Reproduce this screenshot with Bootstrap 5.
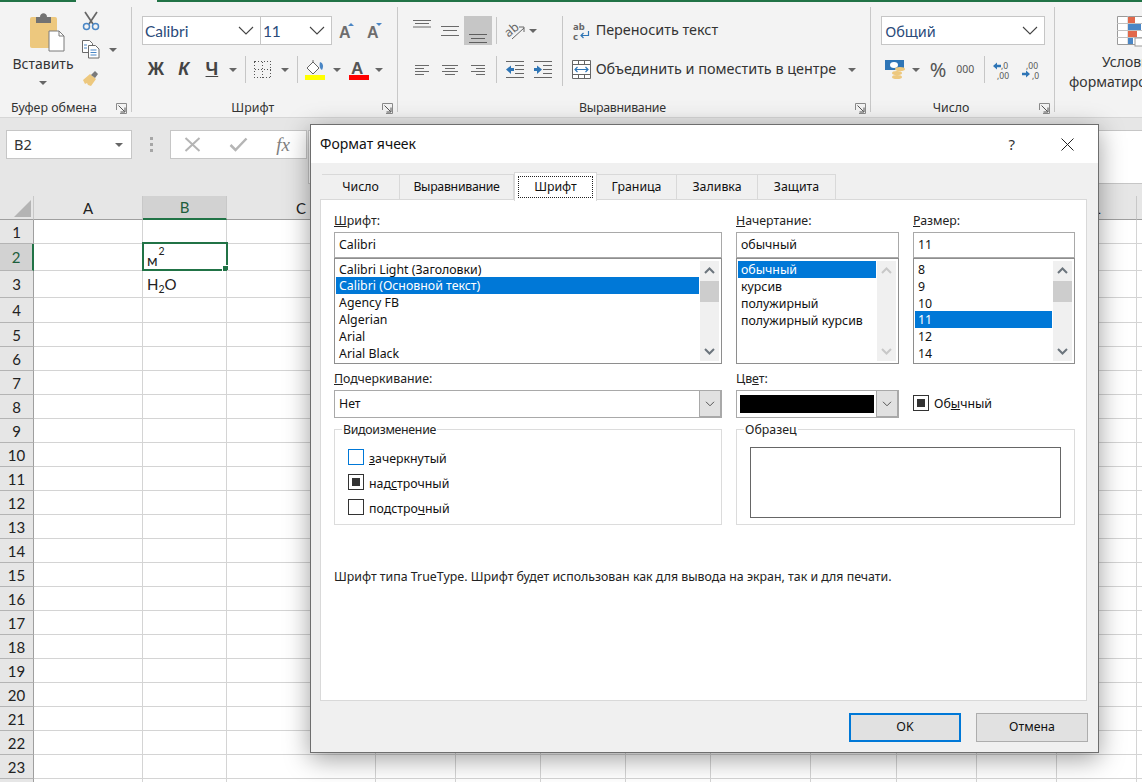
<!DOCTYPE html>
<html lang="ru">
<head>
<meta charset="utf-8">
<title>Формат ячеек</title>
<link href="https://cdn.jsdelivr.net/npm/bootstrap@5.3.0/dist/css/bootstrap.min.css" rel="stylesheet">
<style>
html,body{margin:0;height:782px;overflow:hidden;background:#fff}
body{width:1142px;font-family:"Noto Sans","Open Sans",sans-serif;font-size:13px;color:#222;line-height:1.2;position:relative}
.stripe{height:2px}
.stripe i{display:block;background:#217346}
.stripe .lft{width:76px}
.stripe .gap{width:81px;background:#f3f3f3}
.rib{height:116px;background:#f3f3f3;border-bottom:1px solid #d6d6d6}
.rib svg{overflow:visible}
.grp{height:105px;margin-top:5px;border-right:1px solid #c8c8c8;padding:9px 0 0 10px;position:relative}
.g1{width:132px;padding-left:7px}.g2{width:266px}.g3{width:474px}.g4{width:184px}.g5{width:87px;border:0;padding:0}
.grp-body{height:80px}
.rr{height:29px}
.rr+.rr{margin-top:10px}
.cl{width:28px;height:29px;flex:none}
.cr{width:14px;height:29px;flex:none}
.car{display:block;width:0;height:0;border:4px solid transparent;border-top:4px solid #666;border-bottom:0}
.vs{width:1px;background:#c6c6c6;flex:none}
.vs-s{height:27px}
.glabel{position:absolute;left:0;right:0;bottom:-5px;height:18px;font-size:12.4px}
.glabel span{flex:1;text-align:center;padding-right:8px;color:#333}
.launch{width:11px;height:11px;margin-right:4px;flex:none}
.tight{letter-spacing:-.3px}
.combo{height:29px;background:#fff;border:1px solid #c6c6c6;padding:0 6px 0 2px;font:15.5px Lato,"Noto Sans",sans-serif;color:#2a4a7a;flex:none}
.combo+.combo{margin-left:-1px}
.combo-num{font:14.5px "Noto Sans",sans-serif;padding-left:3px}
.rb-t{font-size:14px;color:#333;white-space:nowrap}
.rb-w{font-size:14.4px;padding-bottom:2px}
.paste-col{width:72px;height:86px}
.paste-ic{margin:-4px 0 0 10px;flex:none}
.paste-col .rb-t{margin-top:1px;line-height:18px}
.small-col{width:28px;margin-left:-2px;margin-top:-10px}
.copy-car{margin:19px 0 0 1px}
.active-cl{background:#c6c6c6}
.fb-b{font:bold 18px "Liberation Sans",sans-serif;color:#444}
.fbar{height:78px;background:#e6e6e6;padding:12px 0 0 6px}
.namebox{width:126px;height:29px;background:#fff;border:1px solid #c6c6c6;padding:1px 8px 0 7px;font-size:14.5px;color:#333}
.dots{width:38px;height:29px;gap:3px}
.dots i{display:block;width:3px;height:3px;background:#a6a6a6}
.fxbox{width:137px;height:29px;background:#fff;border:1px solid #c6c6c6;padding:0 16px 0 13px}
.fx-t{font:italic 19px "Liberation Serif",serif;color:#7f7f7f}
.finput{flex:1;height:54px;margin-left:1px;background:#fff;border:1px solid #c6c6c6;border-right:0}
.sheet{border-collapse:separate;border-spacing:0;table-layout:fixed;width:1180px;font:15px Lato,"Noto Sans",sans-serif;color:#222}
.sheet td,.sheet th{padding:0;border-right:1px solid #d4d4d4;border-bottom:1px solid #d4d4d4;font-weight:400;height:24px;position:relative;white-space:nowrap}
.sheet th{background:#e6e6e6;text-align:center;border-color:#b4b4b4;font-size:15px}
.sheet thead th{height:24px;border-right-color:#c8c8c8;border-bottom-color:#9f9f9f}
.sheet tbody th{border-right-color:#9f9f9f}
.sheet thead .sel{background:#d2d2d2;color:#1d5e3c;border-bottom:2px solid #217346}
.sheet tbody .sel{background:#d2d2d2;color:#1d5e3c;border-right:2px solid #217346}
.cv{padding-left:4px!important}
.sheet .cv-b{vertical-align:bottom;padding-bottom:1px}
.cv sup{font-size:10.5px;top:-1.05em;left:1px;position:relative;vertical-align:baseline}
.cv sub{font-size:10.5px;bottom:-.25em;position:relative;vertical-align:baseline}
.cursor{position:absolute;left:-1px;top:-2px;right:-2px;bottom:-1px;border:2px solid #217346;pointer-events:none}
.cursor i{position:absolute;right:-3px;bottom:-3px;background:#217346;border:1px solid #fff;box-sizing:content-box;width:5px;height:5px}
.corner{position:absolute;left:14px;top:4px}
.dlg{position:absolute;left:310px;top:124px;width:789px;height:629px;background:#f0f0f0;border:1px solid #6e6e6e;box-shadow:0 6px 24px rgba(0,0,0,.38);font-size:12.35px;color:#111}
.dlg-h{height:38px;background:#fff;padding:0 24px 0 9px;font-size:14px}
.dlg-q{font-size:15px;color:#333;margin-right:46px}
.tabs.nav{margin:11px 0 0 11px;height:25px;border:0;flex-wrap:nowrap;position:relative;z-index:1}
.tabs .nav-link{height:25px;padding:0;border:1px solid #d9d9d9;border-bottom:0;border-left:0;border-radius:0;color:#111;background:#f0f0f0;font-size:12.35px;margin:0}
.tabs .t1{width:78px}.tabs .t2{width:114px}.tabs .t4{width:80px}.tabs .t5{width:81px}.tabs .t6{width:78px}
.tabs .nav-link.active{width:83px;height:29px;margin-top:-2px;background:#fff;border:1px solid #d9d9d9;border-bottom:0;padding:3px 3px 2px;color:#111}
.focusbox{display:flex;width:100%;height:22px;align-items:center;justify-content:center;border:1px dotted #222}
.pnl{margin:0 11px 0 9px;height:502px;background:#fff;border:1px solid #d9d9d9;padding:12px 11px 0 13px}
.fgrid{display:grid;grid-template-columns:388px 163px 162px;column-gap:14px}
.flabel{height:20px;line-height:17px;color:#222}
.tinput{height:26px;border:1px solid #a9a9a9;padding:0 0 0 4px;line-height:23px}
.lbox{height:106px;border:1px solid #8e8e8e;display:flex;padding:2px 2px 2px 1px;background:#fff}
.lbox .list-group{flex:1;border-radius:0;overflow:hidden;min-width:0}
.lbox .list-group-item{height:17px;line-height:18px;padding:0 0 0 3px;border:0;border-radius:0;background:transparent;color:#111;font-size:12.35px;white-space:nowrap}
.lbox .list-group-item.active{background:#0078d7;color:#fff}
.sbar{width:19px;background:#f0f0f0;margin-left:1px;position:relative;flex:none}
.sbar .thumb{position:absolute;left:0;right:0;top:20px;height:21px;background:#cdcdcd}
.sbar svg{position:absolute;left:4px}
.sbar .up{top:6px}.sbar .dn{bottom:6px}
.row2{margin-top:6px}
.sel-box{height:28px;border:1px solid #a9a9a9;display:flex;align-items:center;padding-left:4px}
.sel-btn{width:22px;height:26px;margin-left:auto;background:#e1e1e1;border-left:1px solid #a9a9a9;border-right:1px solid #a9a9a9;border-bottom:1px solid #a9a9a9;flex:none}
.swatch{width:134px;height:18px;background:#000}
.sel-box.cc{padding-left:3px}
.chk{width:16px;height:16px;border:1px solid #333;background:#fff;flex:none;padding:3px}
.chk i{display:block;width:8px;height:8px;background:#333}
.chk.foc{border-color:#0078d7}
.obych{padding-bottom:7px;gap:5px}
.obych span{line-height:16px;position:relative;top:1px}
.fset{height:96px;border:1px solid #dcdcdc;position:relative}
.fset .leg{position:absolute;left:7px;top:-8px;background:#fff;padding:0 1px;line-height:16px;color:#222}
.row3{margin-top:11px}
.span2{grid-column:span 2}
.chks{padding:15px 0 0 13px}
.chks .ck-r{height:25px;gap:5px}
.ck-r .chk{margin-top:-2px}
.ck-r span{padding-top:3px}
.sample{margin:17px 13px 0 13px;height:71px;border:1px solid #666}
.note{margin-top:45px;color:#222}
.dlg-f{padding:12px 10px 0 0;gap:15px}
.dlg .btn{width:112px;height:29px;padding:0;border-radius:0;background:#e1e1e1;border:1px solid #adadad;color:#111;font-size:12.35px;line-height:1}
.dlg .btn.btn-primary{border:2px solid #0078d7}
.ic-bd{shape-rendering:crispEdges}
</style>
</head>
<body>
<svg width="0" height="0" class="d-block position-absolute">
  <symbol id="ch-w" viewBox="0 0 16 9"><path d="M1 1l7 7 7-7" fill="none" stroke="#444" stroke-width="1.1"/></symbol>
  <symbol id="launcher" viewBox="0 0 11 11"><path d="M.5 7V.5H10.5V10.5H4" fill="none" stroke="#8a8a8a"/><path d="M2.5 2.5l6 6M9 4.5V9H4.5" fill="none" stroke="#555"/></symbol>
  <symbol id="up" viewBox="0 0 11 7"><path d="M1 6l4.5-4.5L10 6" fill="none" stroke="currentColor" stroke-width="2"/></symbol>
  <symbol id="dn" viewBox="0 0 11 7"><path d="M1 1l4.500 4.500L10 1" fill="none" stroke="currentColor" stroke-width="2"/></symbol>
  <symbol id="ch-s" viewBox="0 0 10 6"><path d="M1 .8l4 4 4-4" fill="none" stroke="#555" stroke-width="1"/></symbol>
  <symbol id="al-t" viewBox="0 0 20 20"><path d="M1 3.500h18M3 6.500h14M1 10h18" stroke="#6a6a6a" fill="none"/></symbol>
  <symbol id="al-m" viewBox="0 0 20 20"><path d="M1 5.500h18M3 9.500h14M1 14.500h18" stroke="#6a6a6a" fill="none"/></symbol>
  <symbol id="al-b" viewBox="0 0 20 20"><path d="M1 10.500h18M3 14.500h14M1 18.500h18" stroke="#5e5e5e" fill="none"/></symbol>
  <symbol id="h-l" viewBox="0 0 16 12"><path d="M1 1.500h14M1 4.500h9M1 7.500h14M1 10.500h9" stroke="#6a6a6a" fill="none"/></symbol>
  <symbol id="h-c" viewBox="0 0 16 12"><path d="M0 1.500h16M3 4.500h10M0 7.500h16M3 10.500h10" stroke="#6a6a6a" fill="none"/></symbol>
  <symbol id="h-r" viewBox="0 0 16 12"><path d="M1 1.500h14M6 4.500h9M1 7.500h14M6 10.500h9" stroke="#6a6a6a" fill="none"/></symbol>
</svg>

<div class="stripe d-flex"><i class="lft"></i><i class="gap"></i><i class="flex-fill"></i></div>

<div class="rib d-flex">
  <section class="grp g1">
    <div class="grp-body d-flex">
      <div class="paste-col d-flex flex-column align-items-center">
        <svg class="paste-ic" width="38" height="42" viewBox="0 0 38 42"><rect x="1" y="5" width="27" height="31" rx="2" fill="#edc87e"/><path d="M7 5h4c0-5 7-5 7 0h4v6H7z" fill="#727272"/><path d="M20 19h10l5 5v15H20z" fill="#fff" stroke="#7a7a7a"/><path d="M30 19v5h5" fill="none" stroke="#7a7a7a"/></svg>
        <div class="rb-t">Вставить</div>
        <span class="car mt-2"></span>
      </div>
      <div class="small-col d-flex flex-column">
        <div class="cl d-flex align-items-center justify-content-center"><svg width="18" height="20" viewBox="0 0 18 20"><path d="M3 1l8 12M15 1L7 13" stroke="#666" stroke-width="1.7" fill="none"/><circle cx="4.500" cy="15.500" r="3" fill="none" stroke="#4a86c5" stroke-width="1.500"/><circle cx="13.500" cy="15.500" r="3" fill="none" stroke="#4a86c5" stroke-width="1.500"/></svg></div>
        <div class="cl d-flex align-items-center justify-content-center"><svg width="18" height="19" viewBox="0 0 18 19"><path d="M.5.500h7l3 3v9H.5z" fill="#fff" stroke="#6a6a6a"/><path d="M6.500 5.500h7l3.500 3.500v9H6.500z" fill="#fff" stroke="#6a6a6a"/><path d="M2 5h3M2 8h3M8.500 10h6M8.500 12.500h6M8.500 15h6" stroke="#4a86c5"/></svg></div>
        <div class="cl d-flex align-items-center justify-content-center"><svg width="18" height="17" viewBox="0 0 18 17"><path d="M1 10l7-6 6 5-5 7-3-1-1-2-2 1z" fill="#edc87e"/><path d="M9 5l4-4 3 3-3 4z" fill="#7a7a7a"/></svg></div>
      </div>
      <div class="cr d-flex align-items-center justify-content-center copy-car"><span class="car"></span></div>
    </div>
    <div class="glabel d-flex align-items-center"><span>Буфер обмена</span><svg class="launch"><use href="#launcher"/></svg></div>
  </section>

  <section class="grp g2">
    <div class="rr d-flex align-items-center">
      <div class="combo d-flex align-items-center justify-content-between" style="width:119px"><span>Calibri</span><svg width="16" height="9"><use href="#ch-w"/></svg></div>
      <div class="combo d-flex align-items-center justify-content-between" style="width:72px"><span>11</span><svg width="16" height="9"><use href="#ch-w"/></svg></div>
      <div class="cl d-flex align-items-center justify-content-center"><svg width="18" height="18" viewBox="0 0 18 18"><text x="2" y="16" font-family="Liberation Sans" font-size="16" font-weight="bold" fill="#6d6d6d">A</text><path d="M11 4l3-3 3 3z" fill="#4a86c5"/></svg></div>
      <div class="cl d-flex align-items-center justify-content-center"><svg width="18" height="18" viewBox="0 0 18 18"><text x="2" y="16" font-family="Liberation Sans" font-size="16" font-weight="bold" fill="#6d6d6d">A</text><path d="M11 1l3 3 3-3z" fill="#4a86c5"/></svg></div>
    </div>
    <div class="rr d-flex align-items-center">
      <div class="cl d-flex align-items-center justify-content-center fb-b">Ж</div>
      <div class="cl d-flex align-items-center justify-content-center fb-b fst-italic">К</div>
      <div class="cl d-flex align-items-center justify-content-center fb-b"><u>Ч</u></div>
      <div class="cr d-flex align-items-center justify-content-center"><span class="car"></span></div>
      <div class="vs vs-s" style="margin-left:5px"></div>
      <div class="cl d-flex align-items-center justify-content-center" style="margin-left:3px"><svg class="ic-bd" width="17" height="17" viewBox="0 0 17 17"><path d="M.5.500h16v16H.5zM8.500.500v16M.5 8.500h16" fill="none" stroke="#555" stroke-dasharray="1 2"/></svg></div>
      <div class="cr d-flex align-items-center justify-content-center" style="width:16px"><span class="car"></span></div>
      <div class="vs vs-s" style="margin-left:4px"></div>
      <div class="cl d-flex align-items-center justify-content-center" style="margin-left:4px"><svg width="21" height="20" viewBox="0 0 21 20"><path d="M2 8l6-6 6 6-6 6z" fill="#fff" stroke="#666"/><path d="M8 2V0" stroke="#666"/><path d="M15 2c3 1 4 4 2 8-2-1-3-4-2-8z" fill="#4a86c5"/><rect x="0" y="15" width="20" height="5" fill="#ffff00"/></svg></div>
      <div class="cr d-flex align-items-center justify-content-center"><span class="car"></span></div>
      <div class="cl d-flex align-items-center justify-content-center" style="margin-left:1px"><svg width="20" height="20" viewBox="0 0 20 20"><text x="2" y="14" font-family="Liberation Sans" font-size="17" font-weight="bold" fill="#555">A</text><rect x="0" y="15" width="20" height="5" fill="#f00"/></svg></div>
      <div class="cr d-flex align-items-center justify-content-center" style="width:12px"><span class="car"></span></div>
    </div>
    <div class="glabel d-flex align-items-center"><span>Шрифт</span><svg class="launch"><use href="#launcher"/></svg></div>
  </section>

  <section class="grp g3">
    <div class="grp-body d-flex">
      <div style="width:154px">
        <div class="rr d-flex align-items-center">
          <div class="cl d-flex align-items-center justify-content-center"><svg width="20" height="20" style="margin-top:-8px"><use href="#al-t"/></svg></div>
          <div class="cl d-flex align-items-center justify-content-center"><svg width="20" height="20"><use href="#al-m"/></svg></div>
          <div class="cl d-flex align-items-center justify-content-center active-cl"><svg width="20" height="20" style="margin-top:6px"><use href="#al-b"/></svg></div>
          <div class="vs vs-s" style="margin-left:4px"></div>
          <div class="cl d-flex align-items-center justify-content-center" style="margin-left:4px"><svg width="20" height="20" viewBox="0 0 20 20"><text x="0" y="13" transform="rotate(-40 7 10)" font-family="Noto Sans" font-size="12.500" fill="#666">ab</text><path d="M7 18L19 7M14 6h5v5" fill="none" stroke="#666"/></svg></div>
          <div class="cr d-flex align-items-center justify-content-start"><span class="car"></span></div>
        </div>
        <div class="rr d-flex align-items-center">
          <div class="cl d-flex align-items-center justify-content-center"><svg width="16" height="12"><use href="#h-l"/></svg></div>
          <div class="cl d-flex align-items-center justify-content-center"><svg width="16" height="12"><use href="#h-c"/></svg></div>
          <div class="cl d-flex align-items-center justify-content-center"><svg width="16" height="12"><use href="#h-r"/></svg></div>
          <div class="vs vs-s" style="margin-left:4px"></div>
          <div class="cl d-flex align-items-center justify-content-center" style="margin-left:4px"><svg width="18" height="17" viewBox="0 0 18 17"><path d="M0 .5h18M9 4.500h9M9 8.500h9M9 12.500h9M0 16.500h18" stroke="#666" fill="none"/><path d="M0 8.500l5-4v2.500h3v3H5V13z" fill="#2e75b6"/></svg></div>
          <div class="cl d-flex align-items-center justify-content-center"><svg width="18" height="17" viewBox="0 0 18 17"><path d="M0 .5h18M9 4.500h9M9 8.500h9M9 12.500h9M0 16.500h18" stroke="#666" fill="none"/><path d="M8 8.500l-5-4v2.500H0v3h3V13z" fill="#2e75b6"/></svg></div>
        </div>
      </div>
      <div class="vs" style="height:70px"></div>
      <div style="margin-left:9px">
        <div class="rr d-flex align-items-center">
          <svg width="18" height="18" viewBox="0 0 18 18" class="me-1"><text x="1" y="8" font-family="Noto Sans" font-size="9.500" font-weight="bold" fill="#666">ab</text><text x="1" y="18" font-family="Noto Sans" font-size="9.500" font-weight="bold" fill="#666">c</text><path d="M16.500 9v4.500H9M11.500 11l-2.500 2.500 2.500 2.500" fill="none" stroke="#2e75b6" stroke-width="1.200"/></svg>
          <span class="rb-t rb-w" style="margin-left:2px">Переносить текст</span>
        </div>
        <div class="rr d-flex align-items-center">
          <svg width="19" height="19" viewBox="0 0 19 19" class="me-1"><path d="M.5.500h18v18H.5zM.5 4.500h18M.5 14.500h18M6.500.500v4M12.500.500v4M6.500 14.500v4M12.500 14.500v4" fill="#fff" stroke="#666"/><path d="M3 9.500h13M5.500 7l-2.500 2.500 2.500 2.500M13.500 7l2.500 2.500-2.500 2.500" fill="none" stroke="#2e75b6" stroke-width="1.200"/></svg>
          <span class="rb-t rb-w" style="margin-left:1px">Объединить и поместить в центре</span>
          <span class="car" style="margin-left:12px"></span>
        </div>
      </div>
    </div>
    <div class="glabel d-flex align-items-center"><span class="tight">Выравнивание</span><svg class="launch"><use href="#launcher"/></svg></div>
  </section>

  <section class="grp g4">
    <div class="rr d-flex align-items-center">
      <div class="combo combo-num d-flex align-items-center justify-content-between" style="width:164px"><span>Общий</span><svg width="16" height="9"><use href="#ch-w"/></svg></div>
    </div>
    <div class="rr d-flex align-items-center">
      <div class="cl d-flex align-items-center justify-content-center"><svg width="21" height="20" viewBox="0 0 21 20"><rect y="0" width="19" height="10" fill="#2e75b6"/><ellipse cx="9" cy="5" rx="4" ry="3" fill="#fff"/><ellipse cx="15" cy="9" rx="5" ry="2" fill="#edc87e"/><ellipse cx="12" cy="13" rx="5" ry="2" fill="#edc87e"/><ellipse cx="12" cy="17" rx="5" ry="2" fill="#edc87e"/></svg></div>
      <div class="cr d-flex align-items-center justify-content-center"><span class="car"></span></div>
      <div class="cl d-flex align-items-center justify-content-center" style="margin-left:1px;font-size:20px;color:#555">%</div>
      <div class="cl d-flex align-items-center justify-content-center" style="width:26px;font-size:10.5px;color:#555">000</div>
      <div class="vs vs-s" style="margin-left:6px"></div>
      <div class="cl d-flex align-items-center justify-content-center" style="margin-left:4px"><svg width="20" height="18" viewBox="0 0 20 18"><text x="8" y="8" font-family="Noto Sans" font-size="8.500" fill="#555">,0</text><text x="4" y="18" font-family="Noto Sans" font-size="8.500" fill="#555">,00</text><path d="M0 5l4-3.500v2.200h4v2.600H4v2.200z" fill="#2e75b6"/></svg></div>
      <div class="cl d-flex align-items-center justify-content-center"><svg width="20" height="18" viewBox="0 0 20 18"><text x="5" y="8" font-family="Noto Sans" font-size="8.500" fill="#555">,00</text><text x="11" y="18" font-family="Noto Sans" font-size="8.500" fill="#555">,0</text><path d="M9 13l-4-3.500v2.200H1v2.600h4v2.200z" fill="#2e75b6"/></svg></div>
    </div>
    <div class="glabel d-flex align-items-center"><span>Число</span><svg class="launch"><use href="#launcher"/></svg></div>
  </section>

  <section class="grp g5">
    <svg width="26" height="30" viewBox="0 0 26 30" class="d-block" style="margin:9px 0 0 62px"><path d="M.5.500h25v28H.500z" fill="#fff" stroke="#9a9a9a"/><path d="M0 7.500h26M0 14.500h26M0 21.500h26M11 0v28" stroke="#c0c0c0"/><rect x="11" y="1" width="7" height="6" fill="#e2684a"/><rect x="11" y="8" width="13" height="6" fill="#4a86c5"/><rect x="11" y="15" width="9" height="6" fill="#e2684a"/><rect x="11" y="22" width="5" height="6" fill="#4a86c5"/><rect x="18" y="22" width="8" height="8" fill="#fff" stroke="#9a9a9a"/></svg>
    <div class="rb-t" style="margin:6px 0 0 47px;line-height:20px">Условное</div>
    <div class="rb-t" style="margin-left:14px;line-height:20px">форматирование</div>
  </section>
</div>

<div class="fbar d-flex align-items-start">
  <div class="namebox d-flex align-items-center justify-content-between"><span>B2</span><span class="car"></span></div>
  <div class="dots d-flex flex-column align-items-center justify-content-center"><i></i><i></i><i></i></div>
  <div class="fxbox d-flex align-items-center justify-content-between">
    <svg width="17" height="15" viewBox="0 0 17 15"><path d="M1.500 1l14 13M15.500 1l-14 13" stroke="#b5b5b5" stroke-width="2" fill="none"/></svg>
    <svg width="19" height="15" viewBox="0 0 19 15"><path d="M1.500 8l5 5L17.500 1.500" stroke="#b5b5b5" stroke-width="2.500" fill="none"/></svg>
    <span class="fx-t">fx</span>
  </div>
  <div class="finput"></div>
</div>

<table class="sheet">
  <colgroup><col style="width:34px"><col style="width:109px"><col style="width:84px"><col style="width:149px"><col style="width:80px"><col style="width:85px"><col style="width:85px"><col style="width:85px"><col style="width:100px"><col style="width:86px"><col style="width:80px"><col style="width:80px"><col style="width:80px"><col style="width:43px"></colgroup>
  <thead><tr>
    <th><svg class="corner" width="17" height="17"><path d="M17 0v17H0z" fill="#b4b4b4"/></svg></th>
    <th>A</th><th class="sel">B</th><th>C</th><th></th><th></th><th></th><th></th><th></th><th></th><th></th><th></th><th>L</th><th></th>
  </tr></thead>
  <tbody>
    <tr><th>1</th><td></td><td></td><td></td><td></td><td></td><td></td><td></td><td></td><td></td><td></td><td></td><td></td><td></td></tr>
    <tr><th class="sel" style="height:27px">2</th><td></td><td class="cv cv-b">м<sup>2</sup><span class="cursor"><i></i></span></td><td></td><td></td><td></td><td></td><td></td><td></td><td></td><td></td><td></td><td></td><td></td></tr>
    <tr><th style="height:27px">3</th><td></td><td class="cv">H<sub>2</sub>O</td><td></td><td></td><td></td><td></td><td></td><td></td><td></td><td></td><td></td><td></td><td></td></tr>
    <tr><th style="height:25px">4</th><td></td><td></td><td></td><td></td><td></td><td></td><td></td><td></td><td></td><td></td><td></td><td></td><td></td></tr>
    <tr><th>5</th><td></td><td></td><td></td><td></td><td></td><td></td><td></td><td></td><td></td><td></td><td></td><td></td><td></td></tr>
    <tr><th>6</th><td></td><td></td><td></td><td></td><td></td><td></td><td></td><td></td><td></td><td></td><td></td><td></td><td></td></tr>
    <tr><th>7</th><td></td><td></td><td></td><td></td><td></td><td></td><td></td><td></td><td></td><td></td><td></td><td></td><td></td></tr>
    <tr><th>8</th><td></td><td></td><td></td><td></td><td></td><td></td><td></td><td></td><td></td><td></td><td></td><td></td><td></td></tr>
    <tr><th>9</th><td></td><td></td><td></td><td></td><td></td><td></td><td></td><td></td><td></td><td></td><td></td><td></td><td></td></tr>
    <tr><th>10</th><td></td><td></td><td></td><td></td><td></td><td></td><td></td><td></td><td></td><td></td><td></td><td></td><td></td></tr>
    <tr><th>11</th><td></td><td></td><td></td><td></td><td></td><td></td><td></td><td></td><td></td><td></td><td></td><td></td><td></td></tr>
    <tr><th>12</th><td></td><td></td><td></td><td></td><td></td><td></td><td></td><td></td><td></td><td></td><td></td><td></td><td></td></tr>
    <tr><th>13</th><td></td><td></td><td></td><td></td><td></td><td></td><td></td><td></td><td></td><td></td><td></td><td></td><td></td></tr>
    <tr><th>14</th><td></td><td></td><td></td><td></td><td></td><td></td><td></td><td></td><td></td><td></td><td></td><td></td><td></td></tr>
    <tr><th>15</th><td></td><td></td><td></td><td></td><td></td><td></td><td></td><td></td><td></td><td></td><td></td><td></td><td></td></tr>
    <tr><th>16</th><td></td><td></td><td></td><td></td><td></td><td></td><td></td><td></td><td></td><td></td><td></td><td></td><td></td></tr>
    <tr><th>17</th><td></td><td></td><td></td><td></td><td></td><td></td><td></td><td></td><td></td><td></td><td></td><td></td><td></td></tr>
    <tr><th>18</th><td></td><td></td><td></td><td></td><td></td><td></td><td></td><td></td><td></td><td></td><td></td><td></td><td></td></tr>
    <tr><th>19</th><td></td><td></td><td></td><td></td><td></td><td></td><td></td><td></td><td></td><td></td><td></td><td></td><td></td></tr>
    <tr><th>20</th><td></td><td></td><td></td><td></td><td></td><td></td><td></td><td></td><td></td><td></td><td></td><td></td><td></td></tr>
    <tr><th>21</th><td></td><td></td><td></td><td></td><td></td><td></td><td></td><td></td><td></td><td></td><td></td><td></td><td></td></tr>
    <tr><th>22</th><td></td><td></td><td></td><td></td><td></td><td></td><td></td><td></td><td></td><td></td><td></td><td></td><td></td></tr>
    <tr><th>23</th><td></td><td></td><td></td><td></td><td></td><td></td><td></td><td></td><td></td><td></td><td></td><td></td><td></td></tr>
    <tr><th>&nbsp;</th><td></td><td></td><td></td><td></td><td></td><td></td><td></td><td></td><td></td><td></td><td></td><td></td><td></td></tr>
  </tbody>
</table>

<div class="dlg" role="dialog">
  <div class="dlg-h d-flex align-items-center">
    <span class="flex-fill">Формат ячеек</span>
    <span class="dlg-q">?</span>
    <svg width="13" height="13" viewBox="0 0 13 13"><path d="M.5.500l12 12M12.500.500l-12 12" stroke="#222" fill="none"/></svg>
  </div>
  <ul class="nav nav-tabs tabs">
    <li class="nav-item"><a class="nav-link t1 d-flex align-items-center justify-content-center">Число</a></li>
    <li class="nav-item"><a class="nav-link t2 tight d-flex align-items-center justify-content-center">Выравнивание</a></li>
    <li class="nav-item"><a class="nav-link active"><span class="focusbox">Шрифт</span></a></li>
    <li class="nav-item"><a class="nav-link t4 d-flex align-items-center justify-content-center">Граница</a></li>
    <li class="nav-item"><a class="nav-link t5 d-flex align-items-center justify-content-center">Заливка</a></li>
    <li class="nav-item"><a class="nav-link t6 d-flex align-items-center justify-content-center">Защита</a></li>
  </ul>
  <div class="pnl">
    <div class="fgrid">
      <div>
        <div class="flabel"><u>Ш</u>рифт:</div>
        <div class="tinput">Calibri</div>
        <div class="lbox">
          <div class="list-group">
            <div class="list-group-item">Calibri Light (Заголовки)</div>
            <div class="list-group-item active">Calibri (Основной текст)</div>
            <div class="list-group-item">Agency FB</div>
            <div class="list-group-item">Algerian</div>
            <div class="list-group-item">Arial</div>
            <div class="list-group-item">Arial Black</div>
          </div>
          <div class="sbar text-secondary"><svg class="up" width="11" height="7"><use href="#up"/></svg><div class="thumb"></div><svg class="dn" width="11" height="7"><use href="#dn"/></svg></div>
        </div>
      </div>
      <div>
        <div class="flabel"><u>Н</u>ачертание:</div>
        <div class="tinput">обычный</div>
        <div class="lbox">
          <div class="list-group">
            <div class="list-group-item active">обычный</div>
            <div class="list-group-item">курсив</div>
            <div class="list-group-item">полужирный</div>
            <div class="list-group-item">полужирный курсив</div>
          </div>
          <div class="sbar" style="color:#c8c8c8"><svg class="up" width="11" height="7"><use href="#up"/></svg><svg class="dn" width="11" height="7"><use href="#dn"/></svg></div>
        </div>
      </div>
      <div>
        <div class="flabel"><u>Р</u>азмер:</div>
        <div class="tinput">11</div>
        <div class="lbox">
          <div class="list-group">
            <div class="list-group-item">8</div>
            <div class="list-group-item">9</div>
            <div class="list-group-item">10</div>
            <div class="list-group-item active">11</div>
            <div class="list-group-item">12</div>
            <div class="list-group-item">14</div>
          </div>
          <div class="sbar text-secondary"><svg class="up" width="11" height="7"><use href="#up"/></svg><div class="thumb"></div><svg class="dn" width="11" height="7"><use href="#dn"/></svg></div>
        </div>
      </div>
    </div>
    <div class="fgrid row2">
      <div>
        <div class="flabel"><u>П</u>одчеркивание:</div>
        <div class="sel-box"><span>Нет</span><div class="sel-btn d-flex align-items-center justify-content-center"><svg width="10" height="6"><use href="#ch-s"/></svg></div></div>
      </div>
      <div>
        <div class="flabel">Цв<u>е</u>т:</div>
        <div class="sel-box cc"><div class="swatch"></div><div class="sel-btn d-flex align-items-center justify-content-center"><svg width="10" height="6"><use href="#ch-s"/></svg></div></div>
      </div>
      <div class="obych d-flex align-items-end">
        <div class="chk"><i></i></div><span>Об<u>ы</u>чный</span>
      </div>
    </div>
    <div class="fgrid row3">
      <div class="fset">
        <span class="leg tight">Видоизменение</span>
        <div class="chks">
          <div class="ck-r d-flex align-items-center"><div class="chk foc"></div><span><u>з</u>ачеркнутый</span></div>
          <div class="ck-r d-flex align-items-center"><div class="chk"><i></i></div><span>над<u>с</u>трочный</span></div>
          <div class="ck-r d-flex align-items-center"><div class="chk"></div><span>подстро<u>ч</u>ный</span></div>
        </div>
      </div>
      <div class="fset span2">
        <span class="leg">Образец</span>
        <div class="sample"></div>
      </div>
    </div>
    <div class="note">Шрифт типа TrueType. Шрифт будет использован как для вывода на экран, так и для печати.</div>
  </div>
  <div class="dlg-f d-flex justify-content-end">
    <button class="btn btn-primary" type="button">OK</button>
    <button class="btn btn-secondary" type="button">Отмена</button>
  </div>
</div>
</body>
</html>
